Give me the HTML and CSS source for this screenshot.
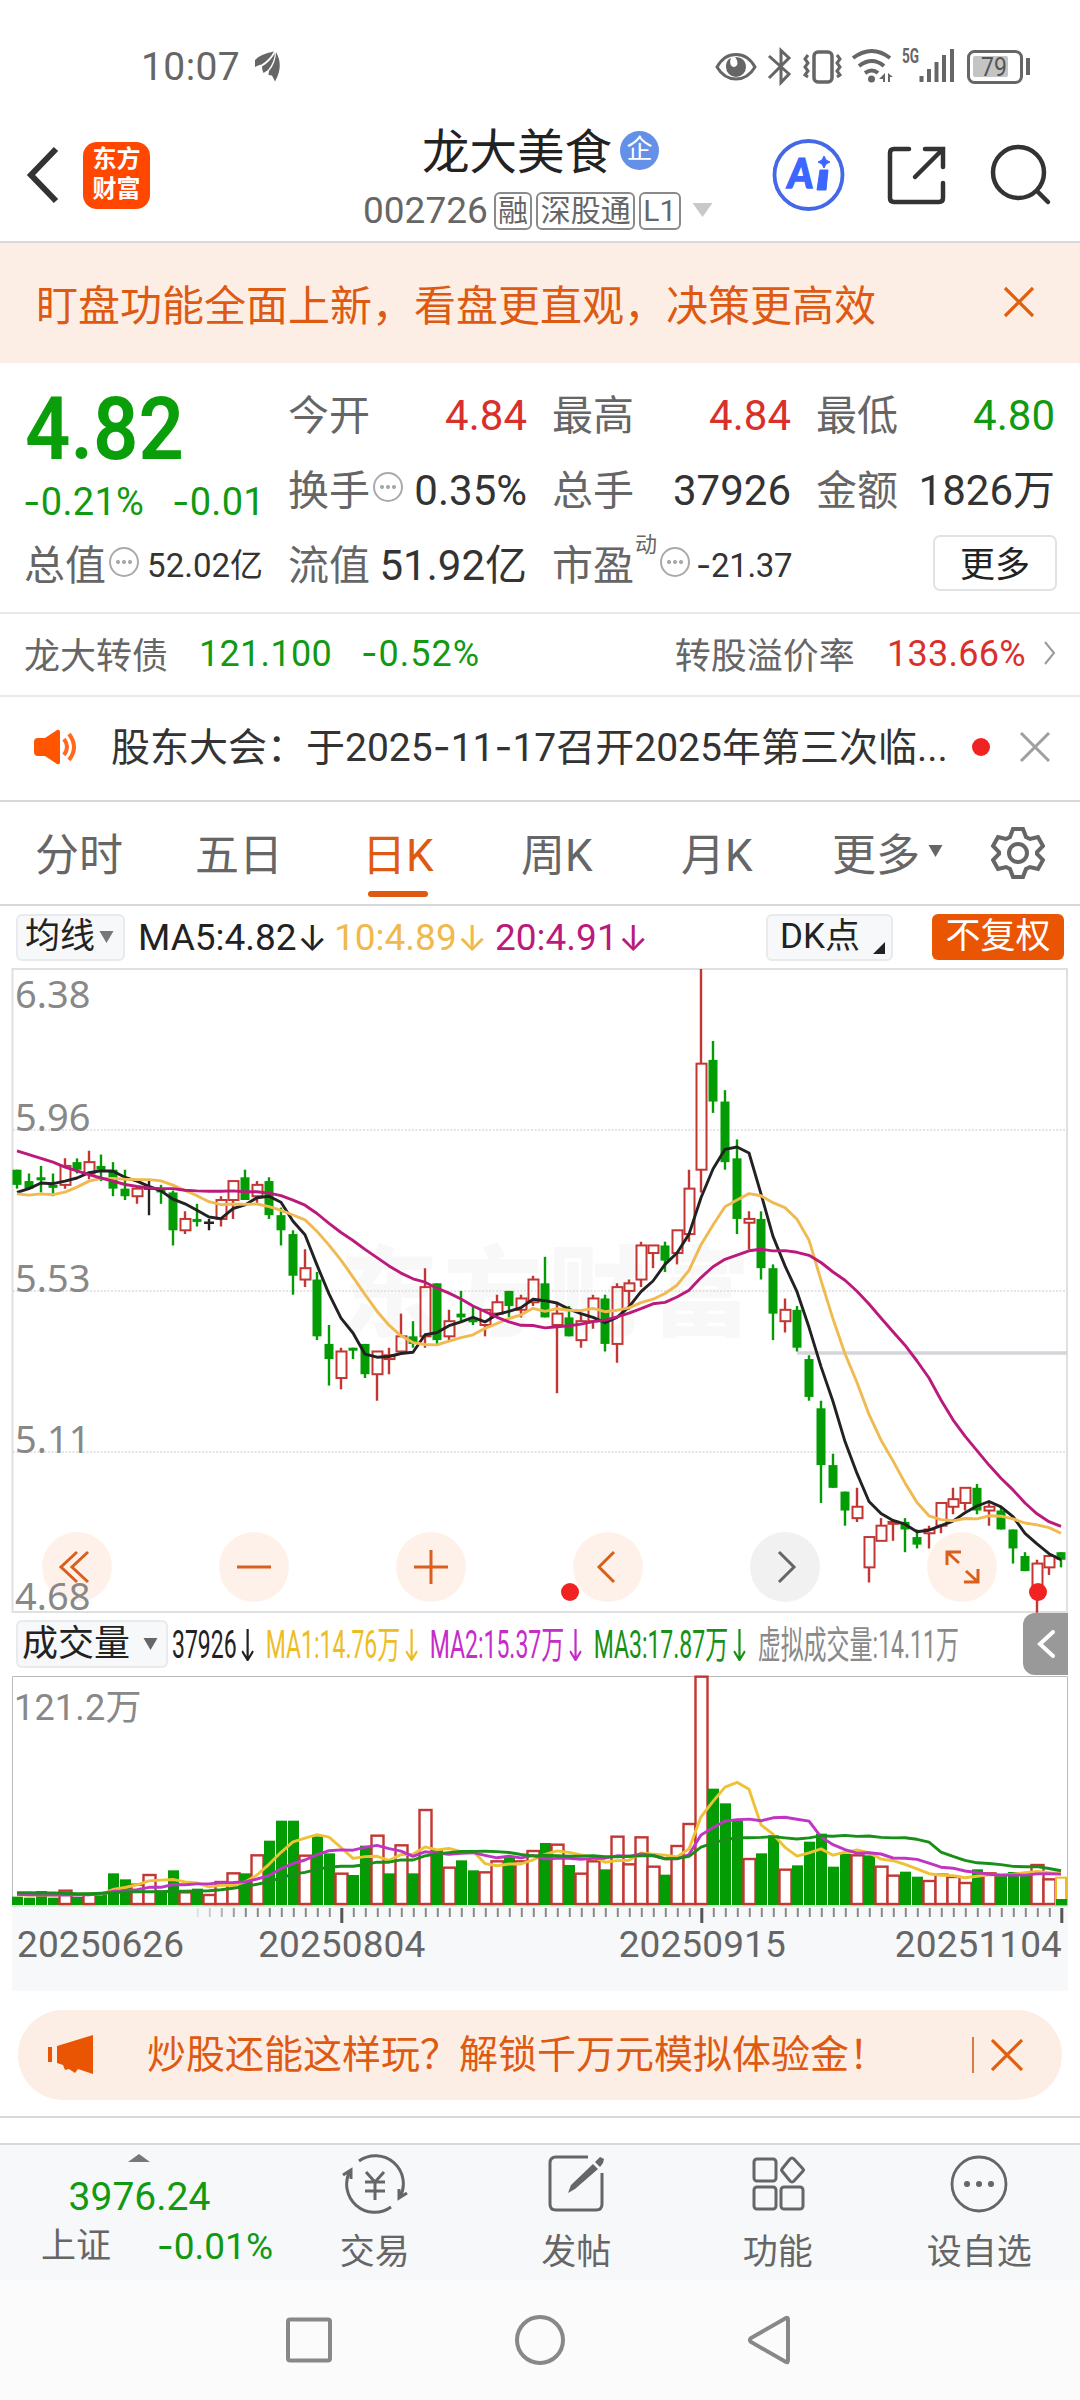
FILE: index.html
```html
<!DOCTYPE html>
<html lang="zh-CN">
<head>
<meta charset="utf-8">
<title>龙大美食 002726</title>
<link rel="stylesheet" href="styles.css">
</head>
<body>
<div class="screen">
  <div class="status">
    <span class="clock">10:07</span>
    <svg class="leaf" width="30" height="34" viewBox="0 0 30 34" fill="#666"><path d="M22 2.500Q8 5 3 11V18Q6 16 9.500 15.500Q17 11 22 2.500Z"/><path d="M23 4Q18 13 10 17.500Q10 21 11.500 24L16 21Q22 14 23 4Z"/><path d="M24 3Q24 14 17 22L16.500 26L20 26.500L23 32.500Q32 17 24 3Z"/></svg>
    <svg class="status-icons" width="320" height="40" viewBox="712 45 320 40" fill="none" stroke="#666" stroke-width="3">
      <path d="M717 66Q724 53.500 736 53.500T755 66Q748 78 736 78T717 66Z"/><path fill="#666" stroke="none" d="M735 56C742 56 746 60 746 66A10 10 0 0 1 726 66C726 61 728 58 731 57C729 62 731 66 734 66C739 65 738 60 735 56Z"/>
      <path d="M769 55L789 73L781 81.500V49.500L789 57L769 77"/>
      <rect x="814" y="51" width="18" height="30" rx="4" stroke-width="3.500"/><path d="M808 54l-3 4 3 4-3 4 3 4-3 4 3 2M837 54l3 4-3 4 3 4-3 4 3 4-3 2"/>
      <path stroke-width="4" d="M853 57Q872 43 890 57M859 65Q872 55 884 65M865 72Q872 67 878 72"/><circle cx="871.500" cy="78" r="3.500" fill="#666" stroke="none"/><path fill="#666" stroke="none" d="M885 72v9h-2v-3h-4zM888 81v-9l5 4h-3v5z"/>
      <path stroke-width="4" d="M921.500 81v-6M929 81v-13M936.500 81v-20M944 81v-27M952 81v-33"/>
      <rect x="968.500" y="50.500" width="53" height="31" rx="6"/><rect x="973" y="55" width="35" height="21" rx="2" fill="#c4c4c4" stroke="none"/><path d="M1028 57v17" stroke-width="4"/>
      <text class="net" transform="translate(902 62) scale(.68 1)">5G</text><text class="batt" transform="translate(981 75) scale(.92 1)">79</text>
    </svg>
  </div>

  <header class="head">
    <svg class="back" width="34" height="60" viewBox="0 0 34 60"><path d="M30 4L5 30L30 56" fill="none" stroke="#333" stroke-width="6"/></svg>
    <div class="logo"><span>东方</span><span>财富</span></div>
    <div class="title">
      <div class="name">龙大美食<i class="qi">企</i></div>
      <div class="code">002726<span class="tag">融</span><span class="tag">深股通</span><span class="tag">L1</span><svg width="21" height="14" viewBox="0 0 20 14"><path d="M0 0H20L10 14Z" fill="#c8c8c8"/></svg></div>
    </div>
    <svg class="head-icons" width="300" height="80" viewBox="768 135 300 80" fill="none" stroke="#333" stroke-width="4.500">
      <circle cx="808.500" cy="175" r="34" stroke="#4468e6" stroke-width="3.800"/>
      <text class="ai" transform="translate(786.500 187.500) skewX(-5) scale(.88 1)">A</text><path d="M820 170h8l-2 20h-9z" fill="#3c66ff" stroke="#3c66ff" stroke-width="1"/><path d="M824 156l2 4 4 2-4 2-2 4-2-4-4-2 4-2z" fill="#3c66ff" stroke="#3c66ff" stroke-width="1"/>
      <g stroke-linecap="round"><path d="M909 149H894Q890 149 890 153V198Q890 202 894 202H939Q943 202 943 198V183M925 149H943V167M942 150L915 177"/>
      <circle cx="1018.500" cy="172.500" r="25.500"/><path d="M1037 191L1048 202"/></g>
    </svg>
  </header>

  <div class="notice">
    <span>盯盘功能全面上新，看盘更直观，决策更高效</span>
    <svg width="32" height="32" viewBox="0 0 32 32"><path d="M2 2L30 30M30 2L2 30" stroke="#e0600f" stroke-width="3.200"/></svg>
  </div>

  <section class="quote">
    <div class="last">
      <div class="price">4.82</div>
      <div class="change green"><span><u>-</u>0.21%</span><span><u>-</u>0.01</span></div>
    </div>
    <div class="cell"><label>今开</label><b class="red">4.84</b></div>
    <div class="cell"><label>最高</label><b class="red">4.84</b></div>
    <div class="cell"><label>最低</label><b class="green">4.80</b></div>
    <div class="cell"><label>换手</label><i class="info"></i><b>0.35%</b></div>
    <div class="cell"><label>总手</label><b>37926</b></div>
    <div class="cell"><label>金额</label><b>1826万</b></div>
    <div class="cell"><label>总值</label><i class="info"></i><b class="small">52.02亿</b></div>
    <div class="cell"><label>流值</label><b>51.92亿</b></div>
    <div class="cell"><label>市盈</label><sup>动</sup><i class="info"></i><b class="small pe"><u>-</u>21.37</b></div>
    <div class="cell end"><button class="more">更多</button></div>
  </section>

  <div class="bond">
    <span>龙大转债</span><span class="green bond-price">121.100</span><span class="green bond-chg"><u>-</u>0.52%</span>
    <span class="premium">转股溢价率</span><span class="red rate">133.66%</span>
    <svg width="12" height="24" viewBox="0 0 12 24"><path d="M1 1L10 12L1 23" fill="none" stroke="#999" stroke-width="2"/></svg>
  </div>

  <div class="news">
    <svg width="46" height="36" viewBox="0 0 46 36"><path d="M5 9h7L24 1q3-1 3 2v30q0 3-3 2L12 27H5q-4 0-4-4V13q0-4 4-4z" fill="#ff5500"/><path d="M31 10q6 8 0 16M36 5q10 13 0 26" fill="none" stroke="#ff6a20" stroke-width="4"/></svg>
    <span class="news-text">股东大会：于2025<u>-</u>11<u>-</u>17召开2025年第三次临...</span>
    <i class="dot"></i>
    <svg width="32" height="30" viewBox="0 0 32 30"><path d="M2 1L30 29M30 1L2 29" stroke="#a0a0a0" stroke-width="3"/></svg>
  </div>

  <nav class="tabs">
    <a>分时</a><a>五日</a><a class="on">日K</a><a>周K</a><a>月K</a>
    <a>更多<svg width="15" height="12" viewBox="0 0 14 12"><path d="M0 0H14L7 12Z" fill="#666"/></svg></a>
    <svg class="gear" width="54" height="54" viewBox="-27 -27 54 54" fill="none" stroke="#666" stroke-width="4"><path d="M-5-24H5L8-16Q10-15 12-14L20-16L25-7L19-1V1L25 7L20 16L12 14Q10 15 8 16L5 24H-5L-8 16Q-10 15-12 14L-20 16L-25 7L-19 1V-1L-25-7L-20-16L-12-14Q-10-15-8-16Z"/><circle r="9"/></svg>
  </nav>

  <div class="ma-row">
    <span class="pill ma-pick">均线<svg width="15" height="12" viewBox="0 0 14 12"><path d="M0 0H14L7 12Z" fill="#777"/></svg></span>
    <span class="ma ma5">MA5:4.82<i>↓</i></span><span class="ma ma10">10:4.89<i>↓</i></span><span class="ma ma20">20:4.91<i>↓</i></span>
    <span class="pill dk">DK点</span>
    <span class="adjust">不复权</span>
  </div>

  <section class="kline">
    <svg id="kline" width="1080" height="645" viewBox="0 0 1080 645"></svg>
    <div class="controls">
      <svg viewBox="-35 -35 70 70"><path d="M0-15L-16 0L0 15M11-15L-5 0L11 15"/></svg>
      <svg viewBox="-35 -35 70 70"><path d="M-17 0H17"/></svg>
      <svg viewBox="-35 -35 70 70"><path d="M-17 0H17M0-17V17"/></svg>
      <svg viewBox="-35 -35 70 70"><path d="M6-15L-9 0L6 15"/></svg>
      <svg class="off" viewBox="-35 -35 70 70"><path d="M-6-15L9 0L-6 15"/></svg>
      <svg viewBox="-35 -35 70 70"><path d="M-1-15H-15V-2M-15-15L-3-4M2 15H16V2M16 15L4 4"/></svg>
    </div>
    <div class="axis"><span>6.38</span><span>5.96</span><span>5.53</span><span>5.11</span><span>4.68</span></div>
  </section>

  <div class="vol-row">
    <span class="pill vol-pick">成交量<svg width="15" height="12" viewBox="0 0 14 12"><path d="M0 0H14L7 12Z" fill="#666"/></svg></span>
    <div class="vol-legend">
      <div class="narrow">
        <span class="v0">37926<svg width="20" height="32" viewBox="0 0 12 32" preserveAspectRatio="none"><path d="M6 0V31M.5 22L6 31L11.500 22"/></svg></span>
        <span class="v1">MA1:14.76万<svg width="20" height="32" viewBox="0 0 12 32" preserveAspectRatio="none"><path d="M6 0V31M.5 22L6 31L11.500 22"/></svg></span>
        <span class="v2">MA2:15.37万<svg width="20" height="32" viewBox="0 0 12 32" preserveAspectRatio="none"><path d="M6 0V31M.5 22L6 31L11.500 22"/></svg></span>
        <span class="v3">MA3:17.87万<svg width="20" height="32" viewBox="0 0 12 32" preserveAspectRatio="none"><path d="M6 0V31M.5 22L6 31L11.500 22"/></svg></span>
        <span class="v4">虚拟成交量:14.11万</span>
      </div>
    </div>
    <span class="fold"><svg width="18" height="28" viewBox="0 0 18 28"><path d="M16 2L3 14L16 26" fill="none" stroke="#fff" stroke-width="4" stroke-linecap="round"/></svg></span>
  </div>

  <section class="volume">
    <svg id="volume" width="1080" height="250" viewBox="0 0 1080 250"></svg>
    <span class="vol-max">121.2万</span>
    <div class="dates"><span>20250626</span><span>20250804</span><span>20250915</span><span>20251104</span></div>
  </section>

  <div class="promo">
    <svg width="46" height="40" viewBox="0 0 46 40" fill="#ea5504"><path d="M0 12h4v15H0zM9 11L45 0V39L30 34L27 38L21 34L17 35L15 30L9 28Z"/></svg>
    <span class="promo-text">炒股还能这样玩？解锁千万元模拟体验金！</span>
    <i class="bar"></i>
    <svg width="32" height="32" viewBox="0 0 32 32"><path d="M1 1L31 31M31 1L1 31" stroke="#e0600f" stroke-width="3.200"/></svg>
  </div>
  <div class="gap"></div>

  <footer class="dock">
    <div class="index green">
      <svg width="22" height="8" viewBox="0 0 22 8"><path d="M11 0L22 8H0Z" fill="#777"/></svg>
      <div class="index-value">3976.24</div>
      <div class="index-row"><em>上证</em><span><u>-</u>0.01%</span></div>
    </div>
    <a><svg width="66" height="60" viewBox="-33 -30 66 60" fill="none" stroke="#666" stroke-width="3"><path d="M-16-23A28 28 0 0 1 25 13M16 23A28 28 0 0 1-25-13M-32-9L-24-14V-5M32 9L24 14V5M-9-12L0-2L9-12M0-2V16M-10-2H10M-10 7H10"/></svg>交易</a>
    <a><svg width="66" height="60" viewBox="-33 -30 66 60" fill="none" stroke="#666" stroke-width="3"><path d="M12-27H-20Q-26-27-26-21V20Q-26 26-20 26H20Q26 26 26 20V-11"/><path fill="#666" stroke="none" d="M17-20L22-15L-1 5L-8 9L-5 1ZM19-22L24-27L28-25L27-21L24-17Z"/></svg>发帖</a>
    <a><svg width="66" height="60" viewBox="-33 -30 66 60" fill="none" stroke="#666" stroke-width="3"><rect x="-24" y="-25" width="22" height="22" rx="3"/><rect x="-24" y="3" width="22" height="22" rx="3"/><rect x="3" y="3" width="22" height="22" rx="3"/><path d="M12-25Q14-27 16-25L25-15Q26-14 25-13L16-3Q14-1 12-3L4-13Q3-14 4-15Z"/></svg>功能</a>
    <a><svg width="66" height="60" viewBox="-33 -30 66 60" fill="#666"><circle r="27" fill="none" stroke="#666" stroke-width="2.800"/><circle cx="-12" r="3"/><circle r="3"/><circle cx="12" r="3"/></svg>设自选</a>
  </footer>

  <div class="sysnav">
    <svg width="510" height="60" viewBox="283 2310 510 60" fill="none" stroke="#888" stroke-width="4"><rect x="288" y="2319.500" width="42" height="41" rx="2"/><circle cx="540" cy="2340" r="23"/><path d="M786 2318Q788 2317 788 2320V2360Q788 2363 786 2362L751 2342Q749 2340 751 2338Z"/></svg>
  </div>
</div>
<script src="chart.js"></script>
</body>
</html>
```
FILE: styles.css
```css
* { box-sizing: border-box; }
body { margin: 0; background: #fff; font-family: Roboto, "Noto Sans CJK SC", sans-serif; color: #333; }
i, em { font-style: normal; }
/* minus signs and date hyphens use a wider dash than the digits' font */
u { text-decoration: none; font-family: Inter, sans-serif; line-height: 1; }
svg { display: block; flex: none; }
.screen { width: 1080px; height: 2400px; overflow: hidden; display: flex; flex-direction: column; }
.screen > * { flex: none; }
.green { color: #119a11; }
.red { color: #d9302c; }

.status { height: 110px; display: flex; align-items: center; padding: 22px 48px 0 141px; color: #666; }
.clock { font-size: 39px; line-height: 40px; width: 111px; padding-top: 2px; letter-spacing: .4px; }
.status-icons { margin-left: auto; }
.net { font: 700 20px Roboto, sans-serif; fill: #666; stroke: none; }
.batt { font: 25px Roboto, sans-serif; fill: #555; stroke: none; }

.head { height: 133px; border-bottom: 2px solid #d8d8d8; display: flex; align-items: flex-start; padding-left: 26px; }
.back { margin-top: 35px; }
.logo { width: 67px; height: 67px; margin: 32px 0 0 23px; border-radius: 14px; background: #ff4700; color: #fff; font: 700 24px/30px "Noto Sans CJK SC", sans-serif; display: flex; flex-direction: column; align-items: center; }
.title { margin-left: 213px; width: 349px; margin-right: 56px; }
.name { display: flex; align-items: center; font-size: 47.500px; line-height: 54px; height: 54px; margin: 16px 0 0 59px; color: #222; }
.qi { width: 39px; height: 39px; border-radius: 50%; background: #6490e8; color: #fff; font-size: 26px; line-height: 37px; text-align: center; margin: -5px 0 0 8px; }
.code { display: flex; align-items: center; font-size: 37px; height: 46px; line-height: 46px; margin-top: 8px; color: #666; white-space: nowrap; }
.tag { font-size: 30px; line-height: 34px; height: 38px; border: 2px solid #8a8a8a; border-radius: 6px; padding: 0 2.300px; margin-left: 4px; }
.tag:nth-child(1) { margin-left: 6px; }
.code > svg { margin: -2px 0 0 11px; }
.head-icons { margin-top: 25px; }
.ai { font: 900 41px Lato, sans-serif; fill: #3c66ff; stroke: #3c66ff; stroke-width: 1.500px; }

.notice { height: 120px; background: #fceee5; color: #de5a12; display: flex; align-items: center; justify-content: space-between; padding: 0 45px 2px 36px; font-size: 42px; }

.quote { height: 251px; padding: 15px 25px 0; display: grid; grid-template-columns: 238px 238px 238px 238px; grid-template-rows: 75px 75px 75px; column-gap: 26px; border-bottom: 2px solid #eaeaea; }
.last { grid-row: 1 / 3; }
.price { font-size: 87px; font-weight: 600; line-height: 100px; height: 103px; margin-top: 1px; color: #0a9f0a; width: 180px; transform: scaleX(.915); transform-origin: 0 0; }
.change { display: flex; justify-content: space-between; font-size: 38px; line-height: 40px; letter-spacing: .3px; margin: 0 -2px; white-space: nowrap; }
.cell { display: flex; align-items: center; font-size: 41px; line-height: 74px; white-space: nowrap; }
.cell label { color: #666; margin-left: -1px; }
.cell b { font-weight: 400; font-size: 42px; margin-left: auto; }
.cell b.small { font-size: 33px; }
.cell b.pe { margin-left: 6px; letter-spacing: -.3px; }
.cell sup { font-size: 22px; line-height: 22px; margin: -42px 0 0 1px; color: #666; vertical-align: baseline; }
.info { flex: none; width: 30px; height: 30px; margin: -7px 0 0 3px; border: 2px solid #aaa; border-radius: 50%; background: radial-gradient(circle at 7px 13px, #aaa 1.800px, transparent 2.300px), radial-gradient(circle at 13px 13px, #aaa 1.800px, transparent 2.300px), radial-gradient(circle at 19px 13px, #aaa 1.800px, transparent 2.300px); }
.cell.end { justify-content: flex-end; margin-right: -2px; }
.more { width: 124px; height: 56px; margin-top: -6px; border: 2px solid #e2e2e2; border-radius: 7px; background: #fff; color: #222; font: 35px/48px "Noto Sans CJK SC", sans-serif; padding: 0 0 2px; }

.bond { height: 83px; border-bottom: 2px solid #eaeaea; display: flex; align-items: center; padding: 0 24px 4px; font-size: 36px; color: #666; }
.bond-price { margin-left: 31px; letter-spacing: .3px; }
.bond-chg { margin-left: 29px; letter-spacing: 1px; }
.premium { margin-left: auto; }
.rate { margin: 0 18px 0 32px; letter-spacing: .3px; }
.bond .green, .bond .red { padding-top: 2px; }

.news { height: 105px; border-bottom: 2px solid #d8d8d8; display: flex; align-items: center; padding: 0 29px 3px 33px; }
.news-text { flex: none; font-size: 39px; line-height: 60px; margin-left: 32px; width: 861px; white-space: nowrap; padding-top: 2px; }
.dot { width: 18px; height: 18px; border-radius: 50%; background: #f12222; margin-right: 29px; }

.tabs { height: 104px; border-bottom: 2px solid #d8d8d8; display: flex; align-items: center; padding: 0 35px; font-size: 44px; color: #666; }
.tabs a { flex: none; height: 102px; line-height: 60px; padding-top: 6px; display: flex; align-items: center; width: 160px; white-space: nowrap; }
.tabs a:nth-child(2) { width: 167px; }
.tabs a:nth-child(3) { width: 159px; }
.tabs a:nth-child(6) { width: 148px; margin-left: -9px; }
.tabs a svg { margin: -10px 0 0 8px; }
.tabs .on { color: #de5a12; position: relative; }
.on::after { content: ""; position: absolute; left: 6px; top: 89px; width: 60px; height: 6px; border-radius: 3px; background: #de5a12; }
.gear { margin-left: 11px; }

.ma-row { height: 62px; display: flex; align-items: center; padding: 0 16px; }
.pill { display: flex; align-items: center; height: 47px; background: #f7f8fa; border: 2px solid #e8eaed; border-radius: 6px; color: #222; font-size: 35px; line-height: 42px; white-space: nowrap; }
.ma-pick { width: 109px; padding-left: 7px; }
.ma-pick svg { margin-left: 4px; }
.ma { display: flex; font-size: 37px; line-height: 46px; padding-top: 2px; white-space: nowrap; }
.ma i { font-family: Inter, sans-serif; font-size: 36px; width: 27px; margin-left: 2px; display: flex; justify-content: center; }
.ma5 { width: 196px; margin-left: 13px; color: #222; }
.ma10 { width: 161px; color: #f0b94c; }
.ma20 { color: #bb1a7c; }
.dk { position: relative; width: 127px; margin-left: auto; padding-left: 12px; }
.dk::after { content: ""; position: absolute; right: 6px; bottom: 5px; border: 6px solid #222; border-top-color: transparent; border-left-color: transparent; }
.adjust { width: 132px; height: 46px; margin-left: 39px; border-radius: 6px; background: #ea5504; color: #fff; font-size: 35px; line-height: 46px; text-align: center; }

.kline { position: relative; height: 645px; }
.axis span { position: absolute; left: 15px; font: 38px/40px "Noto Sans", sans-serif; color: #888; letter-spacing: 0; }
.axis span:nth-child(1) { top: 5px; }
.axis span:nth-child(2) { top: 128px; }
.axis span:nth-child(3) { top: 289px; }
.axis span:nth-child(4) { top: 450px; }
.axis span:nth-child(5) { top: 607px; }
.controls { position: absolute; left: 42px; top: 564px; display: flex; gap: 107px; }
.controls svg { width: 70px; height: 70px; border-radius: 50%; background: rgba(253, 235, 225, .72); fill: none; stroke: #d8601c; stroke-width: 3; }
.controls .off { background: rgba(235, 235, 235, .7); stroke: #666; }
.mark { font: 900 98px "Noto Sans CJK SC", sans-serif; fill: #f8f8f8; }

.vol-row { height: 62px; display: flex; align-items: center; padding: 0 12px 0 16px; }
.vol-pick { width: 152px; padding-left: 4px; font-size: 36px; height: 48px; }
.vol-pick svg { margin-left: 13px; }
.vol-legend { flex: none; width: 790px; height: 62px; margin-left: 4px; }
.narrow { display: flex; width: 1300px; font-size: 38px; line-height: 64px; white-space: nowrap; transform: scaleX(.605); transform-origin: 0 0; }
.narrow span { flex: none; display: flex; align-items: center; width: 271px; }
.narrow svg { margin: 0 20px 0 auto; fill: none; stroke: currentColor; stroke-width: 2.200; }
.narrow .v0 { width: 155px; color: #222; }
.v1 { color: #edbd25; }
.v2 { color: #c52cc8; }
.v3 { color: #189018; }
.v4 { color: #8a8a8a; }
.fold { width: 45px; height: 62px; margin-left: auto; border-radius: 12px 0 0 12px; background: #999; display: flex; align-items: center; justify-content: center; }

.volume { position: relative; height: 316px; margin: 0 12px; background: linear-gradient(#fff 230px, #f7f8fa 230px); }
.volume svg { margin-left: -12px; }
.vol-max { position: absolute; left: 2px; top: 11px; font-size: 36px; line-height: 44px; color: #888; letter-spacing: .2px; }
.dates { display: flex; margin: -2px 6px 0 5px; font-size: 37px; line-height: 44px; color: #666; letter-spacing: .1px; }
.dates span:nth-child(2) { margin-left: 74px; }
.dates span:nth-child(3) { margin-left: auto; margin-right: 109px; }

.promo { height: 90px; margin: 19px 18px 0; border-radius: 45px; background: #fceee5; color: #de5a12; display: flex; align-items: center; padding: 0 39px 0 30px; }
.promo-text { font-size: 39px; margin-left: 53px; white-space: nowrap; line-height: 86px; }
.bar { width: 2px; height: 36px; background: #d87c4a; margin: 0 17px 0 auto; }
.gap { height: 27px; margin-top: 16px; border-top: 2px solid #d8d8d8; }

.dock { height: 137px; background: #f7f8fa; border-top: 2px solid #d8d8d8; display: flex; }
.index { width: 274px; display: flex; flex-direction: column; align-items: center; }
.index svg { margin: 9px 0 0 3px; }
.index-value { font-size: 39px; line-height: 44px; margin: 13px 0 0 5px; }
.index-row { width: 100%; display: flex; justify-content: space-between; padding: 2px 1px 0 41px; font-size: 37px; line-height: 52px; white-space: nowrap; }
.index em { font-size: 35px; color: #666; }
.dock a { width: 201.500px; display: flex; flex-direction: column; align-items: center; font-size: 35px; line-height: 50px; color: #666; padding-top: 9px; }
.dock a svg { margin-bottom: 14px; }
.sysnav { height: 120px; background: #fbfbfb; display: flex; align-items: center; padding-left: 283px; }
```
FILE: chart.js
```js
// Daily candles in cents: [open, high, low, close]
const candles = [
  [585,585,580,581],[582,584,580,580],[583,586,579,582.5],[581,584,578,580.5],[581,588,580,586],[587,588,584,585],[584,590,582.5,587],[586,589,582,585],
  [585,587,578,580],[580,585,577,578],[578,580.5,576,580],[580,582,573,580],[580,581,576,579],[579,579.5,565,569],[569,574,568,572],[572,576,570,571.5],
  [571,572,569,571],[572,578,570,577],[577,582,572,582],[583,585,577,577],[578,582,576,581],[582,583,572,573],[573,575,565,569],[568,569,552,557],
  [556,564,554,559],[556,558,540,541],[539,544,528,535],[530,538,527,537],[538,538,535,537.4],[539,539,530,531],[531,537,524,537],[535,538,531,536],
  [537,547,537,541],[541,545,538,539],[541,559,538,554],[555,555,539,540],[541,548,540,545],[547,553,545,546],[545.5,549,544,545],[544,548,541,548],
  [547,552,546,550],[553,553,546,549],[548,552,546,551],[550,557,549,556],[555,562,546,546],[544,550,526,547],[546,549,541,541],[540,547,538,545],
  [545,552,543,551],[551,552,537,539],[539,555,534,554],[553,556,548,555],[556,566,554,565],[563,565,559,565],[565,566,558,561],[563,569,560,569],
  [568,585,566,580],[585,638,579,613],[614,619,600,603],[603,606,585,587],[588,593,568,572],[571,574,564,572],[572,574,556,559],[559,560,540,547],
  [545,551,542,548],[548,549,537,538],[535,536,524,525],[522,524,497,507],[507,510,501,501],[500,500,491,495],[493,501,492,496],[480,488,476,488],
  [487,493,487,491],[491.5,492,487,492],[492,493,484,490],[488,490,485,486],[489,491,485,490],[491,497,489,497],[496,501,494,498],[497,501,495,501],
  [501,502,494,495],[495,497,491,496],[495,496,490,490],[490,490,481,485],[483,484,479,479],[475,482,468,481],[480,483,478,483],[484,484,480,482]
];
// Volumes; 688 fills the panel
const volumes = [
  25,22,42,22,46,24,35,32,95,77,64,93,44,104,41,49,33,72,98,95,152,193,253,253,151,206,155,97,90,178,211,95,182,95,288,167,115,134,104,101,134,142,134,165,
  186,184,120,97,134,107,208,125,206,118,91,180,246,688,349,305,252,141,155,209,109,119,190,214,115,154,152,149,118,91,100,85,75,94,87,69,107,98,90,99,92,123,80,82
];
const risingDoji = new Set([11, 16]);
const fallingVolume = new Set([31, 71]);

const GREEN = '#049c04', RED = '#c23633', BLACK = '#222';
const cx = i => 17 + 12 * i;

// Moving average; seed holds the values that need days before the first candle
const average = (values, n, seed) => values.map((_, i) =>
  i < seed.length ? seed[i] : values.slice(Math.max(0, i - n + 1), i + 1).reduce((a, b) => a + b, 0) / n);

const line = (values, y, color) =>
  `<polyline fill="none" stroke="${color}" stroke-width="2.9" stroke-linejoin="round" points="${values.map((v, i) => cx(i) + ',' + y(v).toFixed(1)).join(' ')}"/>`;

function drawKline() {
  const y = p => 1 + (638 - p) * 3.787;
  let s = '<text class="mark" x="340" y="360" textLength="410">东方财富</text>';
  s += '<path d="M12.5 0V645M1067 0V645M12 1H1068M12 644H1068" stroke="#e0e0e0" stroke-width="2" fill="none"/>';
  for (const g of [162, 323, 484]) s += `<path d="M13 ${g}H1067" stroke="#dcdcdc" stroke-width="1.5" stroke-dasharray="2 1.5"/>`;
  s += '<path d="M797 385H1067" stroke="#d3d5d8" stroke-width="3.5"/>';
  candles.forEach(([o, h, l, c], i) => {
    const x = cx(i), top = y(Math.max(o, c)), bottom = y(Math.min(o, c));
    if (o === c) {
      s += `<path d="M${x} ${y(h)}V${y(l)}M${x - 5} ${top}H${x + 5}" stroke="${BLACK}" stroke-width="2.4"/>`;
    } else if (c < o) {
      s += `<path d="M${x} ${y(h)}V${y(l)}" stroke="${GREEN}" stroke-width="2.4"/><rect x="${x - 4.5}" y="${top}" width="9" height="${Math.max(3, bottom - top)}" fill="${GREEN}"/>`;
    } else {
      s += `<path d="M${x} ${y(h)}V${top}M${x} ${bottom}V${y(l)}" stroke="${RED}" stroke-width="2.4"/><rect x="${x - 4.5}" y="${top}" width="10" height="${Math.max(1, bottom - top)}" fill="none" stroke="${RED}" stroke-width="2"/>`;
    }
  });
  const close = candles.map(d => d[3]);
  s += line(average(close, 5, [579, 580, 581.5, 581.3]), y, BLACK);
  s += line(average(close, 10, [578.6, 578.3, 578.6, 578.4, 579.1, 580.4, 582, 582.7, 582.7]), y, '#f0ba50');
  s += line(average(close, 20, [590, 589, 588, 587, 585.7, 584.7, 583.7, 582.8, 582, 581.1, 580.6, 580.2, 580, 580, 579.6, 579.4, 579.3, 579.3, 579.4]), y, '#bb1a7c');
  s += '<circle cx="570" cy="624" r="9" fill="#f12222"/><circle cx="1038" cy="624" r="9" fill="#f12222"/>';
  document.getElementById('kline').innerHTML = s;
}

function drawVolume() {
  const y = v => 230 - v / 3;
  let s = '<path d="M12.5 230V1.5H1067.500V230" fill="none" stroke="#bbb"/><path d="M12 231H1068" stroke="#b8dcb8"/>';
  volumes.forEach((v, i) => {
    const x = cx(i), [o, , , c] = candles[i];
    const up = !fallingVolume.has(i) && (c > o || risingDoji.has(i));
    if (i === 87) {
      s += `<rect x="${x - 5}" y="${y(v)}" width="10" height="${v / 3}" fill="#fff" stroke="#edbd25" stroke-width="2"/><rect x="${x - 5}" y="224" width="11" height="6" fill="${GREEN}"/>`;
    } else if (up) {
      s += `<rect x="${x - 5.5}" y="${y(v) + 1}" width="12" height="${v / 3 - 2}" fill="#fff" stroke="${RED}" stroke-width="2.4"/>`;
    } else {
      s += `<rect x="${x - 5}" y="${y(v)}" width="11" height="${v / 3}" fill="${GREEN}"/>`;
    }
  });
  const h = t => t.map(v => 917 - v);
  s += line(average(volumes, 5, h([886, 887, 887, 887])), y, '#edc235');
  s += line(average(volumes, 10, h([885, 886, 886, 887, 887, 887, 886, 883, 876])), y, '#c036c4');
  s += line(average(volumes, 20, h([880, 880, 881, 881, 882, 883, 883, 882, 880, 878, 877, 877, 877, 876, 876, 875, 874, 871, 867])), y, '#189018');
  for (let i = 15; i < 88; i++) {
    const major = i === 27 || i === 57 || i === 87;
    s += `<path d="M${cx(i) + .8} 233V${major ? 248 : 242}" stroke="${major ? '#555' : '#888'}" stroke-width="${major ? 3 : 2}" opacity="${Math.min(1, (i - 14) / 5)}"/>`;
  }
  document.getElementById('volume').innerHTML = s;
}

drawKline();
drawVolume();
```
